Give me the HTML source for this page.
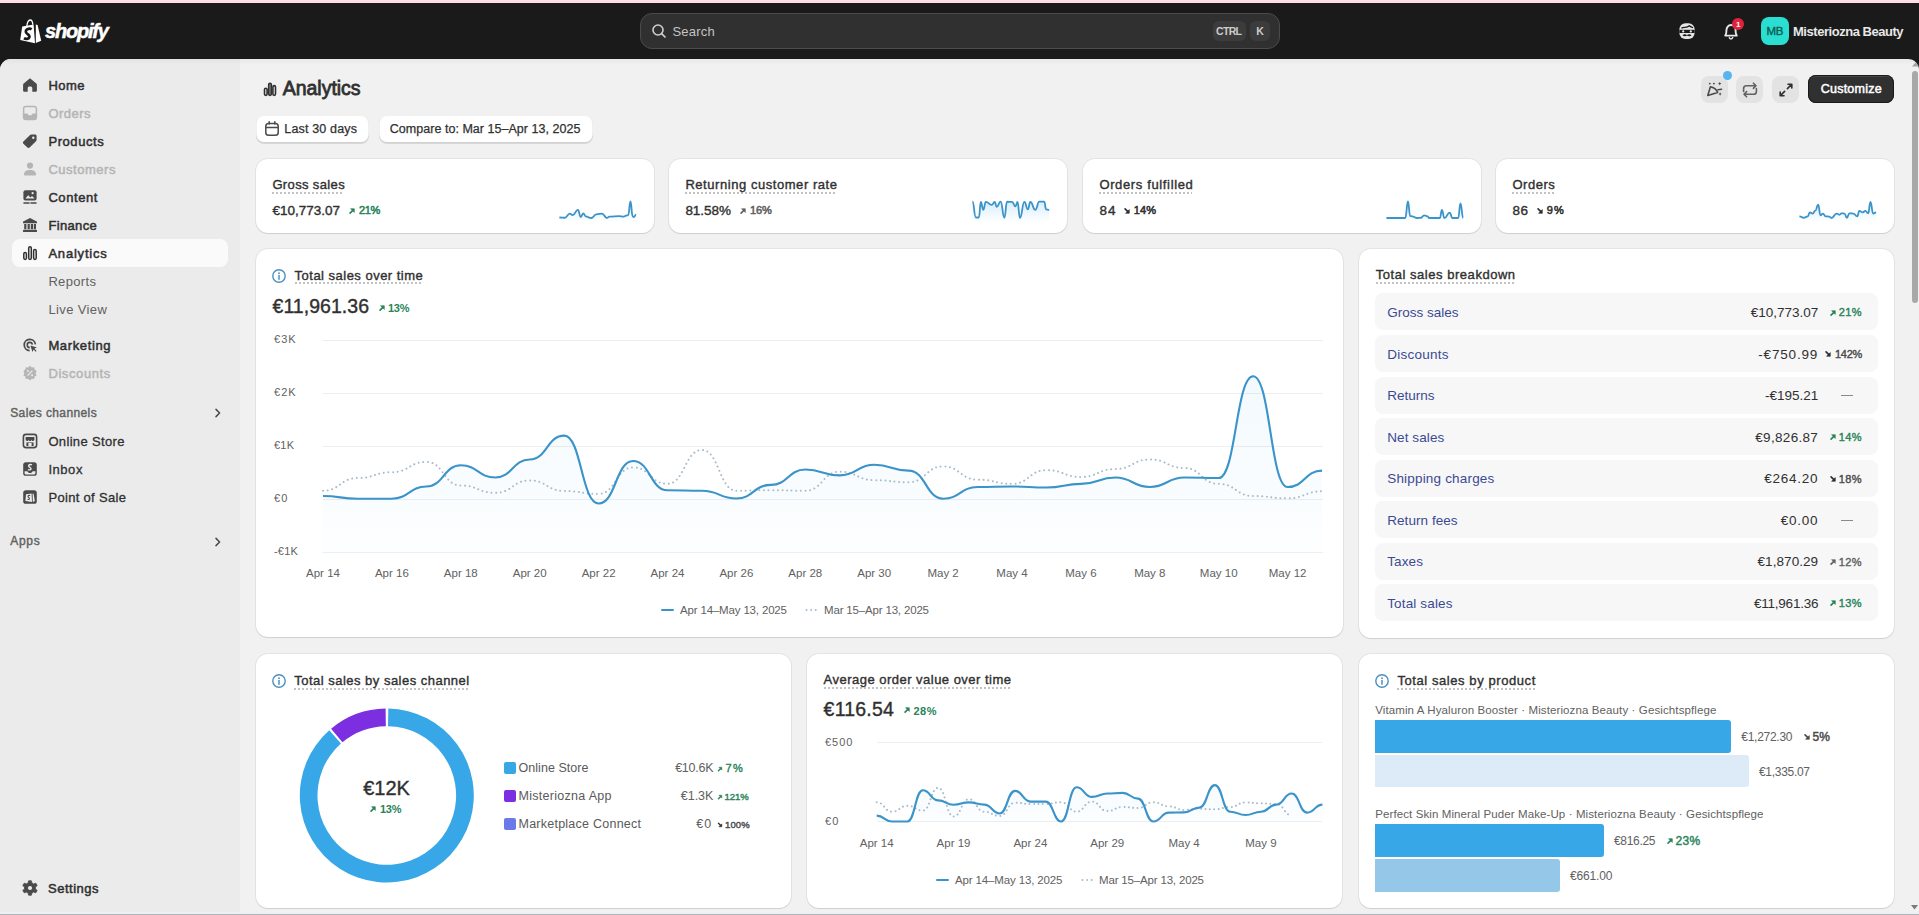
<!DOCTYPE html>
<html><head><meta charset="utf-8"><title>Analytics</title>
<style>
html,body{margin:0;padding:0;width:1919px;height:915px;overflow:hidden;background:#1a1a1a;}
body{position:relative;font-family:"Liberation Sans",sans-serif;}
.t{position:absolute;white-space:nowrap;line-height:1;}
</style></head><body>
<div style="position:absolute;left:0;top:0;width:1919px;height:3px;background:#fbdfe5"></div>
<div style="position:absolute;left:0;top:3px;width:1919px;height:56px;background:#1a1a1a"></div>
<div style="position:absolute;left:0;top:58px;width:1919px;height:857px;background:#1a1a1a"></div>
<div style="position:absolute;left:0;top:58.6px;width:1919px;height:855.4px;background:#f1f1f1;border-radius:11px 11px 0 0;overflow:hidden">
  <div style="position:absolute;left:0;top:0;width:240px;height:856px;background:#ebebeb"></div>
  <div style="position:absolute;left:0;top:0;width:1919px;height:6px;background:linear-gradient(rgba(0,0,0,0.035),rgba(0,0,0,0))"></div>
</div>
<div style="position:absolute;left:0;top:912px;width:1919px;height:2px;background:#eeeff1"></div>
<div style="position:absolute;left:0;top:914px;width:1919px;height:1px;background:#b2b5b8"></div>

<svg style="position:absolute;left:0;top:0" width="120" height="58">
 <path d="M22.2,26.6 L33.6,24.4 L35.0,43.2 L20.2,40.0 Z" fill="#fff"/>
 <path d="M35.8,24.6 L37.6,24.9 L41.2,40.8 L35.8,43.0 Z" fill="#fff"/>
 <path d="M26.8,26.2 C27.2,22.6 28.6,20.2 30.2,20.0 C31.6,19.9 32.6,21.4 32.8,24.6" fill="none" stroke="#fff" stroke-width="1.3"/>
 <path d="M31.6,29.4 C30.2,28.4 26.4,28.2 25.8,31.2 C25.2,34.2 30.2,34.0 29.4,37.2 C28.8,39.4 25.4,39.2 24.0,38.2" fill="none" stroke="#1a1a1a" stroke-width="2.7"/>
</svg>
<div style="position:absolute;left:640px;top:13px;width:638px;height:34px;border:1px solid #4b4b4b;border-radius:12px;background:#303030"></div>
<svg style="position:absolute;left:650px;top:22px" width="18" height="18" viewBox="0 0 18 18">
 <circle cx="8" cy="8" r="5" fill="none" stroke="#cfcfcf" stroke-width="1.6"/>
 <path d="M11.6,11.6 L15,15" stroke="#cfcfcf" stroke-width="1.7" stroke-linecap="round"/>
</svg>
<div style="position:absolute;left:1213px;top:21px;width:33px;height:20px;border-radius:6px;background:#3c3c3c"></div>
<div style="position:absolute;left:1250px;top:21px;width:20px;height:20px;border-radius:6px;background:#3c3c3c"></div>
<svg style="position:absolute;left:1676px;top:20px" width="22" height="22" viewBox="0 0 22 22">
 <rect x="3.4" y="3.2" width="15.2" height="15.8" rx="6" fill="#e6e6e6"/>
 <path d="M5.4 8.2 C7.6 6.2 10.6 8.6 13.4 5.8 C14.6 7 16 7.4 17 7.6" fill="none" stroke="#1a1a1a" stroke-width="1.3"/>
 <rect x="3.4" y="9.8" width="15.2" height="3.2" fill="#1a1a1a"/>
 <circle cx="7.2" cy="11.4" r="1.15" fill="#e6e6e6"/><circle cx="14.8" cy="11.4" r="1.15" fill="#e6e6e6"/>
 <path d="M6.4 15.6 C8.2 13.6 9.8 14.4 11 15 C12.2 14.4 13.8 13.6 15.6 15.6 C14 16.4 12.2 16.2 11 15.6 C9.8 16.2 8 16.4 6.4 15.6 Z" fill="#1a1a1a"/>
</svg>
<svg style="position:absolute;left:1720px;top:20px" width="22" height="22" viewBox="0 0 22 22">
 <path d="M5.2,15.6 L5.8,14.4 C6.4,13.2 6.4,12 6.4,10.6 C6.4,7.4 8.4,5 11,5 C13.6,5 15.6,7.4 15.6,10.6 C15.6,12 15.6,13.2 16.2,14.4 L16.8,15.6 Z" fill="none" stroke="#e8e8e8" stroke-width="1.9" stroke-linejoin="round"/>
 <path d="M9.2,17.2 C9.4,18.4 10.2,19 11,19 C11.8,19 12.6,18.4 12.8,17.2" fill="none" stroke="#e3e3e3" stroke-width="1.5"/>
</svg>
<div style="position:absolute;left:1732.2px;top:18px;width:11.8px;height:11.8px;border-radius:50%;background:#e0223d"></div>
<div style="position:absolute;left:1761px;top:17px;width:28px;height:28px;border-radius:8px;background:#2adfd1"></div>

<div style="position:absolute;left:12px;top:239px;width:216px;height:28px;border-radius:8px;background:#fafafa"></div>
<svg style="position:absolute;left:20px;top:74.5px" width="20" height="20" viewBox="0 0 20 20"><path d="M10 3.2 L16.3 8.5 C16.7 8.8 16.9 9.3 16.9 9.8 V15.4 C16.9 16.2 16.3 16.8 15.5 16.8 H12.3 V13 C12.3 12 11.5 11.4 10.5 11.4 H9.5 C8.5 11.4 7.7 12 7.7 13 V16.8 H4.5 C3.7 16.8 3.1 16.2 3.1 15.4 V9.8 C3.1 9.3 3.3 8.8 3.7 8.5 Z" fill="#4a4a4a"/></svg>
<svg style="position:absolute;left:20px;top:102.8px" width="20" height="20" viewBox="0 0 20 20"><rect x="3.6" y="3.6" width="12.8" height="12.8" rx="2.2" fill="none" stroke="#b5b5b5" stroke-width="1.5"/><path d="M3.6 10.4 H7.4 L8.6 12.2 H11.4 L12.6 10.4 H16.4 V14.2 C16.4 15.4 15.6 16.4 14.2 16.4 H5.8 C4.4 16.4 3.6 15.4 3.6 14.2 Z" fill="#b5b5b5"/></svg>
<svg style="position:absolute;left:20px;top:130.5px" width="20" height="20" viewBox="0 0 20 20"><path d="M3.4 10.6 L9.8 4.2 C10.2 3.8 10.8 3.5 11.4 3.5 H15 C16 3.5 16.6 4.2 16.6 5.1 V8.6 C16.6 9.2 16.4 9.8 16 10.2 L9.6 16.6 C9 17.2 8 17.2 7.4 16.6 L3.4 12.8 C2.8 12.2 2.8 11.2 3.4 10.6 Z" fill="#4a4a4a"/><circle cx="13.3" cy="6.8" r="1.2" fill="#ebebeb"/></svg>
<svg style="position:absolute;left:20px;top:158.5px" width="20" height="20" viewBox="0 0 20 20"><circle cx="10" cy="6.6" r="3.1" fill="#b5b5b5"/><path d="M4 15.2 C4 12.4 6.6 10.9 10 10.9 C13.4 10.9 16 12.4 16 15.2 C16 16 15.5 16.5 14.7 16.5 H5.3 C4.5 16.5 4 16 4 15.2 Z" fill="#b5b5b5"/></svg>
<svg style="position:absolute;left:20px;top:186.5px" width="20" height="20" viewBox="0 0 20 20"><rect x="3.4" y="3.2" width="13.2" height="10.4" rx="2" fill="#4a4a4a"/><path d="M5.4 11.4 L8.2 8.2 L10.4 10.4 L12 9 L14.6 11.4 Z" fill="#ebebeb"/><circle cx="12.6" cy="6.2" r="1.1" fill="#ebebeb"/><path d="M4 16 H9 M11 16 H16" stroke="#4a4a4a" stroke-width="1.6" stroke-linecap="round"/></svg>
<svg style="position:absolute;left:20px;top:214.5px" width="20" height="20" viewBox="0 0 20 20"><path d="M10 3 L16.8 6.4 C17 6.5 17 6.8 17 7 V8.2 H3 V7 C3 6.8 3 6.5 3.2 6.4 Z" fill="#4a4a4a"/><rect x="4.2" y="9" width="2.2" height="5.2" fill="#4a4a4a"/><rect x="7.6" y="9" width="2.2" height="5.2" fill="#4a4a4a"/><rect x="10.8" y="9" width="2.2" height="5.2" fill="#4a4a4a"/><rect x="13.8" y="9" width="2.2" height="5.2" fill="#4a4a4a"/><rect x="3" y="14.8" width="14" height="2.2" rx="0.6" fill="#4a4a4a"/></svg>
<svg style="position:absolute;left:20px;top:242.8px" width="20" height="20" viewBox="0 0 20 20"><rect x="3.8" y="9.6" width="2.6" height="6.8" rx="1.3" fill="none" stroke="#303030" stroke-width="1.5"/><rect x="8.7" y="3.8" width="2.6" height="12.6" rx="1.3" fill="none" stroke="#303030" stroke-width="1.5"/><rect x="13.6" y="6.6" width="2.6" height="9.8" rx="1.3" fill="none" stroke="#303030" stroke-width="1.5"/></svg>
<svg style="position:absolute;left:20px;top:334.5px" width="20" height="20" viewBox="0 0 20 20"><path d="M15.4 9.4 A5.6 5.6 0 1 0 9.6 15.6" fill="none" stroke="#4a4a4a" stroke-width="1.7"/><path d="M12.4 9.6 A2.6 2.6 0 1 0 9.8 12.6" fill="none" stroke="#4a4a4a" stroke-width="1.6"/><path d="M10.4 10.4 L17 12.4 L14.4 13.6 L16.6 16 L15.8 16.8 L13.6 14.6 L12.4 17 Z" fill="#4a4a4a"/></svg>
<svg style="position:absolute;left:20px;top:362.5px" width="20" height="20" viewBox="0 0 20 20"><path d="M10 2.8 L11.8 4.4 L14.2 4.2 L14.6 6.6 L16.6 8 L15.6 10.2 L16.6 12.4 L14.6 13.6 L14.2 16 L11.8 15.8 L10 17.4 L8.2 15.8 L5.8 16 L5.4 13.6 L3.4 12.4 L4.4 10.2 L3.4 8 L5.4 6.6 L5.8 4.2 L8.2 4.4 Z" fill="#b5b5b5"/><path d="M7.6 12.6 L12.4 7.6" stroke="#ebebeb" stroke-width="1.3"/><circle cx="7.9" cy="8" r="1" fill="#ebebeb"/><circle cx="12.1" cy="12.2" r="1" fill="#ebebeb"/></svg>
<svg style="position:absolute;left:20px;top:430.5px" width="20" height="20" viewBox="0 0 20 20"><rect x="3.4" y="3.4" width="13.2" height="13.2" rx="2.6" fill="none" stroke="#4a4a4a" stroke-width="1.6"/><path d="M5.6 6 H14.4 V8.6 C14.4 9.6 13.6 10 12.9 10 C12.2 10 11.4 9.6 11.4 8.8 C11.4 9.6 10.7 10 10 10 C9.3 10 8.6 9.6 8.6 8.8 C8.6 9.6 7.8 10 7.1 10 C6.4 10 5.6 9.6 5.6 8.6 Z" fill="#4a4a4a"/><rect x="6.4" y="11.4" width="7.2" height="3.6" fill="#4a4a4a"/><rect x="8.4" y="12" width="3.2" height="3" fill="#ebebeb"/></svg>
<svg style="position:absolute;left:20px;top:458.5px" width="20" height="20" viewBox="0 0 20 20"><rect x="3.2" y="3.2" width="13.6" height="13.6" rx="2.6" fill="#4a4a4a"/><path d="M4.6 12.2 H7.4 C7.8 13.4 8.8 14 10 14 C11.2 14 12.2 13.4 12.6 12.2 H15.4 V14.2 C15.4 14.9 14.9 15.4 14.2 15.4 H5.8 C5.1 15.4 4.6 14.9 4.6 14.2 Z" fill="#ebebeb"/><path d="M12 5.8 C11.2 5.3 9 5.1 8.6 6.7 C8.2 8.4 11.6 8.2 11 10 C10.6 11.2 8.6 11 8 10.5" fill="none" stroke="#ebebeb" stroke-width="1.4"/></svg>
<svg style="position:absolute;left:20px;top:486.5px" width="20" height="20" viewBox="0 0 20 20"><rect x="3.2" y="3.2" width="13.6" height="13.6" rx="2.6" fill="#4a4a4a"/><path d="M6 7.2 L11.6 6.4 L12 15 L5.4 14 Z" fill="#ebebeb"/><path d="M12.6 6.6 L13.6 6.8 L14.8 14 L12.8 15 Z" fill="#ebebeb"/><path d="M10.2 8.6 C9.6 8.2 8.2 8.2 8 9.4 C7.8 10.6 9.8 10.4 9.4 11.8 C9.2 12.6 8.2 12.6 7.6 12.2" fill="none" stroke="#4a4a4a" stroke-width="1.1"/></svg>
<svg style="position:absolute;left:20px;top:878.3px" width="20" height="20" viewBox="0 0 20 20"><path d="M8.6 2.8 H11.4 L11.9 5 L13.6 5.9 L15.8 5.2 L17.2 7.6 L15.5 9.1 V10.9 L17.2 12.4 L15.8 14.8 L13.6 14.1 L11.9 15 L11.4 17.2 H8.6 L8.1 15 L6.4 14.1 L4.2 14.8 L2.8 12.4 L4.5 10.9 V9.1 L2.8 7.6 L4.2 5.2 L6.4 5.9 L8.1 5 Z" fill="#4a4a4a" stroke="#4a4a4a" stroke-width="0.8" stroke-linejoin="round"/><circle cx="10" cy="10" r="2.1" fill="#ebebeb"/></svg>
<svg style="position:absolute;left:210px;top:405px" width="16" height="16" viewBox="0 0 16 16"><path d="M6 4.4 L9.6 8 L6 11.6" fill="none" stroke="#4a4a4a" stroke-width="1.5" stroke-linecap="round" stroke-linejoin="round"/></svg>
<svg style="position:absolute;left:210px;top:534px" width="16" height="16" viewBox="0 0 16 16"><path d="M6 4.4 L9.6 8 L6 11.6" fill="none" stroke="#4a4a4a" stroke-width="1.5" stroke-linecap="round" stroke-linejoin="round"/></svg>
<svg style="position:absolute;left:259.8px;top:79px" width="20" height="20" viewBox="0 0 20 20">
<rect x="4.5" y="9.2" width="2.6" height="7.2" rx="1.3" fill="none" stroke="#303030" stroke-width="1.6"/>
<rect x="8.7" y="4.2" width="2.6" height="12.2" rx="1.3" fill="#9a9a9a" stroke="#303030" stroke-width="1.6"/>
<rect x="12.9" y="6.6" width="2.6" height="9.8" rx="1.3" fill="none" stroke="#303030" stroke-width="1.6"/>
</svg>
<div style="position:absolute;left:256px;top:115.2px;width:113px;height:27.6px;border-radius:8px;background:#fff;box-shadow:0 1px 0 0 rgba(0,0,0,0.10),0 0 0 1px rgba(0,0,0,0.06) inset, 0 -1px 0 0 rgba(0,0,0,0.13) inset;"></div>
<div style="position:absolute;left:378.5px;top:115.2px;width:214px;height:27.6px;border-radius:8px;background:#fff;box-shadow:0 1px 0 0 rgba(0,0,0,0.10),0 0 0 1px rgba(0,0,0,0.06) inset, 0 -1px 0 0 rgba(0,0,0,0.13) inset;"></div>
<svg style="position:absolute;left:262px;top:119px" width="20" height="20" viewBox="0 0 20 20">
<rect x="3.8" y="4.4" width="12.4" height="11.8" rx="2.8" fill="none" stroke="#4a4a4a" stroke-width="1.5"/>
<path d="M3.8 8.4 H16.2 M7.2 2.8 V5 M12.8 2.8 V5" stroke="#4a4a4a" stroke-width="1.5" stroke-linecap="round"/>
</svg>
<div style="position:absolute;left:1701px;top:76px;width:27px;height:27px;border-radius:8px;background:#e3e3e3"></div>
<div style="position:absolute;left:1736px;top:76px;width:27px;height:27px;border-radius:8px;background:#e3e3e3"></div>
<div style="position:absolute;left:1772px;top:76px;width:27px;height:27px;border-radius:8px;background:#e3e3e3"></div>
<svg style="position:absolute;left:1704.5px;top:79.5px" width="20" height="20" viewBox="0 0 20 20">
<path d="M2.8 15.4 L5.4 6.8 C8.4 7.4 11.6 10 12.6 12.4 Z" fill="none" stroke="#4a4a4a" stroke-width="1.6" stroke-linejoin="round"/>
<circle cx="4.8" cy="3.6" r="0.95" fill="#4a4a4a"/><circle cx="8.9" cy="3.6" r="0.95" fill="#4a4a4a"/>
<path d="M14.7 1.9 L15.3 3 L16.4 3.6 L15.3 4.2 L14.7 5.3 L14.1 4.2 L13 3.6 L14.1 3 Z" fill="#4a4a4a"/>
<path d="M13 9.8 L16.6 9.2" stroke="#4a4a4a" stroke-width="1.5" stroke-linecap="round"/>
<path d="M15.1 12.3 L15.7 13.4 L16.8 14 L15.7 14.6 L15.1 15.7 L14.5 14.6 L13.4 14 L14.5 13.4 Z" fill="#4a4a4a"/>
</svg>
<div style="position:absolute;left:1722.6px;top:71.4px;width:9px;height:9px;border-radius:50%;background:#56b4ee"></div>
<svg style="position:absolute;left:1739.5px;top:79.5px" width="20" height="20" viewBox="0 0 20 20">
<path d="M3.6 11.4 V8.6 C3.6 7 4.8 5.8 6.4 5.8 H16 M13.4 3.2 L16 5.8 L13.4 8.4" fill="none" stroke="#616161" stroke-width="1.6" stroke-linecap="round" stroke-linejoin="round"/>
<path d="M16.4 8.6 V11.4 C16.4 13 15.2 14.2 13.6 14.2 H4 M6.6 11.6 L4 14.2 L6.6 16.8" fill="none" stroke="#616161" stroke-width="1.6" stroke-linecap="round" stroke-linejoin="round"/>
</svg>
<svg style="position:absolute;left:1775.5px;top:79.5px" width="20" height="20" viewBox="0 0 20 20">
<path d="M11.4 8.6 L15.6 4.4 M12 4.2 H15.8 V8" fill="none" stroke="#303030" stroke-width="1.6" stroke-linecap="round" stroke-linejoin="round"/>
<path d="M8.6 11.4 L4.4 15.6 M8 15.8 H4.2 V12" fill="none" stroke="#303030" stroke-width="1.6" stroke-linecap="round" stroke-linejoin="round"/>
</svg>
<div style="position:absolute;left:1808px;top:75px;width:86px;height:28px;border-radius:8px;background:#303030;box-shadow:0 0 0 1px #1a1a1a inset, 0 2px 0 0 rgba(255,255,255,0.1) inset"></div>

<div style="position:absolute;left:256px;top:159px;width:398px;height:74px;border-radius:12px;background:#fff;box-shadow:0 1px 1px 0 rgba(26,26,26,0.10), 0 0 0 1px rgba(0,0,0,0.05);"></div>
<div style="position:absolute;left:272px;top:192px;width:72px;height:2px;background-image:linear-gradient(90deg,#c2c2c2 50%,transparent 50%);background-size:4px 2px"></div>
<svg style="position:absolute;left:347px;top:205.6px" width="10" height="10" viewBox="0 0 10 10"><g transform="translate(5 5) scale(0.880) translate(-5 -5)"><path d="M2.8 7.4 L6 4.2" stroke="#29845a" stroke-width="1.9" stroke-linecap="round"/><path d="M3.4 2.4 H7.6 V6.6 Z" fill="#29845a" stroke="#29845a" stroke-width="0.7" stroke-linejoin="round"/></g></svg>
<div style="position:absolute;left:669px;top:159px;width:398px;height:74px;border-radius:12px;background:#fff;box-shadow:0 1px 1px 0 rgba(26,26,26,0.10), 0 0 0 1px rgba(0,0,0,0.05);"></div>
<div style="position:absolute;left:685px;top:192px;width:152px;height:2px;background-image:linear-gradient(90deg,#c2c2c2 50%,transparent 50%);background-size:4px 2px"></div>
<svg style="position:absolute;left:737.8px;top:205.6px" width="10" height="10" viewBox="0 0 10 10"><g transform="translate(5 5) scale(0.880) translate(-5 -5)"><path d="M2.8 7.4 L6 4.2" stroke="#616161" stroke-width="1.9" stroke-linecap="round"/><path d="M3.4 2.4 H7.6 V6.6 Z" fill="#616161" stroke="#616161" stroke-width="0.7" stroke-linejoin="round"/></g></svg>
<div style="position:absolute;left:1083px;top:159px;width:398px;height:74px;border-radius:12px;background:#fff;box-shadow:0 1px 1px 0 rgba(26,26,26,0.10), 0 0 0 1px rgba(0,0,0,0.05);"></div>
<div style="position:absolute;left:1099px;top:192px;width:93px;height:2px;background-image:linear-gradient(90deg,#c2c2c2 50%,transparent 50%);background-size:4px 2px"></div>
<svg style="position:absolute;left:1122px;top:205.6px" width="10" height="10" viewBox="0 0 10 10"><g transform="translate(5 5) scale(0.880) translate(-5 -5)"><path d="M2.8 2.6 L6 5.8" stroke="#303030" stroke-width="1.9" stroke-linecap="round"/><path d="M3.4 7.6 H7.6 V3.4 Z" fill="#303030" stroke="#303030" stroke-width="0.7" stroke-linejoin="round"/></g></svg>
<div style="position:absolute;left:1496px;top:159px;width:398px;height:74px;border-radius:12px;background:#fff;box-shadow:0 1px 1px 0 rgba(26,26,26,0.10), 0 0 0 1px rgba(0,0,0,0.05);"></div>
<div style="position:absolute;left:1512px;top:192px;width:42px;height:2px;background-image:linear-gradient(90deg,#c2c2c2 50%,transparent 50%);background-size:4px 2px"></div>
<svg style="position:absolute;left:1535px;top:205.6px" width="10" height="10" viewBox="0 0 10 10"><g transform="translate(5 5) scale(0.880) translate(-5 -5)"><path d="M2.8 2.6 L6 5.8" stroke="#303030" stroke-width="1.9" stroke-linecap="round"/><path d="M3.4 7.6 H7.6 V3.4 Z" fill="#303030" stroke="#303030" stroke-width="0.7" stroke-linejoin="round"/></g></svg>
<svg style="position:absolute;left:0;top:0;overflow:visible" width="1" height="1">
<defs><linearGradient id="sg0" x1="0" y1="0" x2="0" y2="1"><stop offset="0" stop-color="#4fb0f0" stop-opacity="0.22"/><stop offset="1" stop-color="#4fb0f0" stop-opacity="0"/></linearGradient></defs>
<path d="M559.41,217.52C562.13,217.52 562.13,217.77 564.85,217.77C567.33,217.77 567.33,213.56 569.80,213.56C571.29,213.56 571.29,215.05 572.77,215.05C575.37,215.05 575.37,209.85 577.97,209.85C579.33,209.85 579.33,217.03 580.69,217.03C582.05,217.03 582.05,213.32 583.42,213.32C584.53,213.32 584.53,216.29 585.64,216.29C588.37,216.29 588.37,218.02 591.09,218.02C593.81,218.02 593.81,214.31 596.53,214.31C599.26,214.31 599.26,213.56 601.98,213.56C604.46,213.56 604.46,218.02 606.93,218.02C608.17,218.02 608.17,216.53 609.41,216.53C614.36,216.53 614.36,216.04 619.31,216.04C621.29,216.04 621.29,216.53 623.27,216.53C625.74,216.53 625.74,215.05 628.22,215.05C629.33,215.05 629.33,201.44 630.45,201.44C631.56,201.44 631.56,216.29 632.67,216.29C633.17,216.29 633.17,217.03 633.66,217.03C634.90,217.03 634.90,214.55 636.14,214.55L636.14,222 L559.41,222 Z" fill="url(#sg0)"/>
<path d="M559.41,217.52C562.13,217.52 562.13,217.77 564.85,217.77C567.33,217.77 567.33,213.56 569.80,213.56C571.29,213.56 571.29,215.05 572.77,215.05C575.37,215.05 575.37,209.85 577.97,209.85C579.33,209.85 579.33,217.03 580.69,217.03C582.05,217.03 582.05,213.32 583.42,213.32C584.53,213.32 584.53,216.29 585.64,216.29C588.37,216.29 588.37,218.02 591.09,218.02C593.81,218.02 593.81,214.31 596.53,214.31C599.26,214.31 599.26,213.56 601.98,213.56C604.46,213.56 604.46,218.02 606.93,218.02C608.17,218.02 608.17,216.53 609.41,216.53C614.36,216.53 614.36,216.04 619.31,216.04C621.29,216.04 621.29,216.53 623.27,216.53C625.74,216.53 625.74,215.05 628.22,215.05C629.33,215.05 629.33,201.44 630.45,201.44C631.56,201.44 631.56,216.29 632.67,216.29C633.17,216.29 633.17,217.03 633.66,217.03C634.90,217.03 634.90,214.55 636.14,214.55" fill="none" stroke="#3a93c9" stroke-width="1.8" stroke-linejoin="round"/></svg>
<svg style="position:absolute;left:0;top:0;overflow:visible" width="1" height="1">
<defs><linearGradient id="sg1" x1="0" y1="0" x2="0" y2="1"><stop offset="0" stop-color="#4fb0f0" stop-opacity="0.22"/><stop offset="1" stop-color="#4fb0f0" stop-opacity="0"/></linearGradient></defs>
<path d="M972.43,201.44C974.16,201.44 974.16,217.52 975.89,217.52C977.38,217.52 977.38,217.52 978.86,217.52C979.85,217.52 979.85,201.93 980.84,201.93C982.08,201.93 982.08,209.85 983.32,209.85C984.55,209.85 984.55,201.93 985.79,201.93C988.76,201.93 988.76,204.90 991.73,204.90C993.22,204.90 993.22,201.93 994.70,201.93C995.69,201.93 995.69,206.88 996.68,206.88C998.66,206.88 998.66,201.68 1000.64,201.68C1002.50,201.68 1002.50,217.77 1004.36,217.77C1005.72,217.77 1005.72,201.68 1007.08,201.68C1009.55,201.68 1009.55,201.93 1012.03,201.93C1013.76,201.93 1013.76,206.39 1015.50,206.39C1016.49,206.39 1016.49,201.93 1017.48,201.93C1018.71,201.93 1018.71,217.77 1019.95,217.77C1022.18,217.77 1022.18,201.93 1024.41,201.93C1026.14,201.93 1026.14,209.36 1027.87,209.36C1029.11,209.36 1029.11,201.93 1030.35,201.93C1032.82,201.93 1032.82,209.85 1035.30,209.85C1037.28,209.85 1037.28,201.68 1039.26,201.68C1041.73,201.68 1041.73,201.68 1044.21,201.68C1045.20,201.68 1045.20,209.36 1046.19,209.36C1047.67,209.36 1047.67,209.85 1049.16,209.85L1049.16,222 L972.43,222 Z" fill="url(#sg1)"/>
<path d="M972.43,201.44C974.16,201.44 974.16,217.52 975.89,217.52C977.38,217.52 977.38,217.52 978.86,217.52C979.85,217.52 979.85,201.93 980.84,201.93C982.08,201.93 982.08,209.85 983.32,209.85C984.55,209.85 984.55,201.93 985.79,201.93C988.76,201.93 988.76,204.90 991.73,204.90C993.22,204.90 993.22,201.93 994.70,201.93C995.69,201.93 995.69,206.88 996.68,206.88C998.66,206.88 998.66,201.68 1000.64,201.68C1002.50,201.68 1002.50,217.77 1004.36,217.77C1005.72,217.77 1005.72,201.68 1007.08,201.68C1009.55,201.68 1009.55,201.93 1012.03,201.93C1013.76,201.93 1013.76,206.39 1015.50,206.39C1016.49,206.39 1016.49,201.93 1017.48,201.93C1018.71,201.93 1018.71,217.77 1019.95,217.77C1022.18,217.77 1022.18,201.93 1024.41,201.93C1026.14,201.93 1026.14,209.36 1027.87,209.36C1029.11,209.36 1029.11,201.93 1030.35,201.93C1032.82,201.93 1032.82,209.85 1035.30,209.85C1037.28,209.85 1037.28,201.68 1039.26,201.68C1041.73,201.68 1041.73,201.68 1044.21,201.68C1045.20,201.68 1045.20,209.36 1046.19,209.36C1047.67,209.36 1047.67,209.85 1049.16,209.85" fill="none" stroke="#3a93c9" stroke-width="1.8" stroke-linejoin="round"/></svg>
<svg style="position:absolute;left:0;top:0;overflow:visible" width="1" height="1">
<defs><linearGradient id="sg2" x1="0" y1="0" x2="0" y2="1"><stop offset="0" stop-color="#4fb0f0" stop-opacity="0.22"/><stop offset="1" stop-color="#4fb0f0" stop-opacity="0"/></linearGradient></defs>
<path d="M1386.44,218.02C1395.84,218.02 1395.84,218.02 1405.25,218.02C1406.61,218.02 1406.61,201.44 1407.97,201.44C1409.08,201.44 1409.08,216.04 1410.20,216.04C1411.19,216.04 1411.19,216.29 1412.18,216.29C1414.65,216.29 1414.65,218.02 1417.13,218.02C1419.11,218.02 1419.11,217.77 1421.09,217.77C1422.57,217.77 1422.57,215.30 1424.06,215.30C1425.79,215.30 1425.79,216.29 1427.52,216.29C1428.27,216.29 1428.27,218.02 1429.01,218.02C1434.46,218.02 1434.46,218.02 1439.90,218.02C1440.89,218.02 1440.89,209.85 1441.88,209.85C1443.12,209.85 1443.12,218.02 1444.36,218.02C1447.08,218.02 1447.08,212.57 1449.80,212.57C1451.04,212.57 1451.04,218.02 1452.28,218.02C1455.25,218.02 1455.25,218.02 1458.22,218.02C1459.33,218.02 1459.33,203.42 1460.45,203.42C1461.81,203.42 1461.81,218.02 1463.17,218.02L1463.17,222 L1386.44,222 Z" fill="url(#sg2)"/>
<path d="M1386.44,218.02C1395.84,218.02 1395.84,218.02 1405.25,218.02C1406.61,218.02 1406.61,201.44 1407.97,201.44C1409.08,201.44 1409.08,216.04 1410.20,216.04C1411.19,216.04 1411.19,216.29 1412.18,216.29C1414.65,216.29 1414.65,218.02 1417.13,218.02C1419.11,218.02 1419.11,217.77 1421.09,217.77C1422.57,217.77 1422.57,215.30 1424.06,215.30C1425.79,215.30 1425.79,216.29 1427.52,216.29C1428.27,216.29 1428.27,218.02 1429.01,218.02C1434.46,218.02 1434.46,218.02 1439.90,218.02C1440.89,218.02 1440.89,209.85 1441.88,209.85C1443.12,209.85 1443.12,218.02 1444.36,218.02C1447.08,218.02 1447.08,212.57 1449.80,212.57C1451.04,212.57 1451.04,218.02 1452.28,218.02C1455.25,218.02 1455.25,218.02 1458.22,218.02C1459.33,218.02 1459.33,203.42 1460.45,203.42C1461.81,203.42 1461.81,218.02 1463.17,218.02" fill="none" stroke="#3a93c9" stroke-width="1.8" stroke-linejoin="round"/></svg>
<svg style="position:absolute;left:0;top:0;overflow:visible" width="1" height="1">
<defs><linearGradient id="sg3" x1="0" y1="0" x2="0" y2="1"><stop offset="0" stop-color="#4fb0f0" stop-opacity="0.22"/><stop offset="1" stop-color="#4fb0f0" stop-opacity="0"/></linearGradient></defs>
<path d="M1799.41,216.29C1801.63,216.29 1801.63,217.77 1803.86,217.77C1805.84,217.77 1805.84,216.29 1807.82,216.29C1808.81,216.29 1808.81,212.33 1809.80,212.33C1811.29,212.33 1811.29,213.56 1812.77,213.56C1814.01,213.56 1814.01,210.59 1815.25,210.59C1816.73,210.59 1816.73,204.65 1818.22,204.65C1819.33,204.65 1819.33,215.30 1820.45,215.30C1821.68,215.30 1821.68,213.56 1822.92,213.56C1824.28,213.56 1824.28,216.29 1825.64,216.29C1827.38,216.29 1827.38,216.53 1829.11,216.53C1830.35,216.53 1830.35,218.02 1831.58,218.02C1834.06,218.02 1834.06,213.56 1836.53,213.56C1838.02,213.56 1838.02,214.80 1839.50,214.80C1840.50,214.80 1840.50,213.32 1841.49,213.32C1842.97,213.32 1842.97,213.56 1844.46,213.56C1845.69,213.56 1845.69,217.77 1846.93,217.77C1848.17,217.77 1848.17,213.32 1849.41,213.32C1851.39,213.32 1851.39,213.56 1853.37,213.56C1855.35,213.56 1855.35,216.29 1857.33,216.29C1858.32,216.29 1858.32,210.84 1859.31,210.84C1861.04,210.84 1861.04,212.33 1862.77,212.33C1864.01,212.33 1864.01,210.84 1865.25,210.84C1866.73,210.84 1866.73,213.32 1868.22,213.32C1869.33,213.32 1869.33,201.93 1870.45,201.93C1871.81,201.93 1871.81,213.56 1873.17,213.56C1874.65,213.56 1874.65,212.33 1876.14,212.33L1876.14,222 L1799.41,222 Z" fill="url(#sg3)"/>
<path d="M1799.41,216.29C1801.63,216.29 1801.63,217.77 1803.86,217.77C1805.84,217.77 1805.84,216.29 1807.82,216.29C1808.81,216.29 1808.81,212.33 1809.80,212.33C1811.29,212.33 1811.29,213.56 1812.77,213.56C1814.01,213.56 1814.01,210.59 1815.25,210.59C1816.73,210.59 1816.73,204.65 1818.22,204.65C1819.33,204.65 1819.33,215.30 1820.45,215.30C1821.68,215.30 1821.68,213.56 1822.92,213.56C1824.28,213.56 1824.28,216.29 1825.64,216.29C1827.38,216.29 1827.38,216.53 1829.11,216.53C1830.35,216.53 1830.35,218.02 1831.58,218.02C1834.06,218.02 1834.06,213.56 1836.53,213.56C1838.02,213.56 1838.02,214.80 1839.50,214.80C1840.50,214.80 1840.50,213.32 1841.49,213.32C1842.97,213.32 1842.97,213.56 1844.46,213.56C1845.69,213.56 1845.69,217.77 1846.93,217.77C1848.17,217.77 1848.17,213.32 1849.41,213.32C1851.39,213.32 1851.39,213.56 1853.37,213.56C1855.35,213.56 1855.35,216.29 1857.33,216.29C1858.32,216.29 1858.32,210.84 1859.31,210.84C1861.04,210.84 1861.04,212.33 1862.77,212.33C1864.01,212.33 1864.01,210.84 1865.25,210.84C1866.73,210.84 1866.73,213.32 1868.22,213.32C1869.33,213.32 1869.33,201.93 1870.45,201.93C1871.81,201.93 1871.81,213.56 1873.17,213.56C1874.65,213.56 1874.65,212.33 1876.14,212.33" fill="none" stroke="#3a93c9" stroke-width="1.8" stroke-linejoin="round"/></svg>
<div style="position:absolute;left:256px;top:249px;width:1087px;height:388px;border-radius:12px;background:#fff;box-shadow:0 1px 1px 0 rgba(26,26,26,0.10), 0 0 0 1px rgba(0,0,0,0.05);"></div>
<svg style="position:absolute;left:271px;top:268px" width="16" height="16" viewBox="0 0 16 16"><circle cx="8" cy="8" r="6.2" fill="none" stroke="#4c8fc0" stroke-width="1.4"/><circle cx="8" cy="5.2" r="0.9" fill="#4c8fc0"/><path d="M8 7.4 V11.2" stroke="#4c8fc0" stroke-width="1.5" stroke-linecap="round"/></svg>
<div style="position:absolute;left:295px;top:282px;width:128px;height:2px;background-image:linear-gradient(90deg,#c2c2c2 50%,transparent 50%);background-size:4px 2px"></div>
<svg style="position:absolute;left:376.5px;top:302.6px" width="10" height="10" viewBox="0 0 10 10"><g transform="translate(5 5) scale(0.880) translate(-5 -5)"><path d="M2.8 7.4 L6 4.2" stroke="#29845a" stroke-width="1.9" stroke-linecap="round"/><path d="M3.4 2.4 H7.6 V6.6 Z" fill="#29845a" stroke="#29845a" stroke-width="0.7" stroke-linejoin="round"/></g></svg>
<div style="position:absolute;left:323px;top:339.5px;width:1000px;height:1px;background:#eeeeee"></div>
<div style="position:absolute;left:323px;top:392.5px;width:1000px;height:1px;background:#eeeeee"></div>
<div style="position:absolute;left:323px;top:445.5px;width:1000px;height:1px;background:#eeeeee"></div>
<div style="position:absolute;left:323px;top:498.5px;width:1000px;height:1px;background:#eeeeee"></div>
<div style="position:absolute;left:323px;top:551.5px;width:1000px;height:1px;background:#eeeeee"></div>
<svg style="position:absolute;left:0;top:0;overflow:visible" width="1" height="1">
<defs><linearGradient id="ga" gradientUnits="userSpaceOnUse" x1="0" y1="370" x2="0" y2="552"><stop offset="0" stop-color="#4fb0f0" stop-opacity="0.075"/><stop offset="1" stop-color="#4fb0f0" stop-opacity="0.012"/></linearGradient></defs>
<path d="M323.00,496.05C340.23,496.05 340.23,498.70 357.45,498.70C374.67,498.70 374.67,498.70 391.90,498.70C409.12,498.70 409.12,486.51 426.35,486.51C443.58,486.51 443.58,465.31 460.80,465.31C478.02,465.31 478.02,477.50 495.25,477.50C512.48,477.50 512.48,459.48 529.70,459.48C546.93,459.48 546.93,435.63 564.15,435.63C581.38,435.63 581.38,503.47 598.60,503.47C615.83,503.47 615.83,461.07 633.05,461.07C650.27,461.07 650.27,490.22 667.50,490.22C684.73,490.22 684.73,490.75 701.95,490.75C719.18,490.75 719.18,498.44 736.40,498.44C753.62,498.44 753.62,484.92 770.85,484.92C788.08,484.92 788.08,469.55 805.30,469.55C822.53,469.55 822.53,475.38 839.75,475.38C856.98,475.38 856.98,464.78 874.20,464.78C891.43,464.78 891.43,470.61 908.65,470.61C925.88,470.61 925.88,498.70 943.10,498.70C960.33,498.70 960.33,487.04 977.55,487.04C994.78,487.04 994.78,486.51 1012.00,486.51C1029.22,486.51 1029.22,487.57 1046.45,487.57C1063.68,487.57 1063.68,483.86 1080.90,483.86C1098.12,483.86 1098.12,477.50 1115.35,477.50C1132.58,477.50 1132.58,487.04 1149.80,487.04C1167.03,487.04 1167.03,477.50 1184.25,477.50C1201.47,477.50 1201.47,478.03 1218.70,478.03C1235.93,478.03 1235.93,376.27 1253.15,376.27C1270.38,376.27 1270.38,487.04 1287.60,487.04C1304.83,487.04 1304.83,470.61 1322.05,470.61L1322,552 L323,552 Z" fill="url(#ga)"/>
<path d="M323.00,490.75C340.23,490.75 340.23,478.03 357.45,478.03C374.67,478.03 374.67,472.20 391.90,472.20C409.12,472.20 409.12,461.87 426.35,461.87C443.58,461.87 443.58,485.45 460.80,485.45C478.02,485.45 478.02,492.87 495.25,492.87C512.48,492.87 512.48,480.41 529.70,480.41C546.93,480.41 546.93,490.96 564.15,490.96C581.38,490.96 581.38,493.93 598.60,493.93C615.83,493.93 615.83,467.43 633.05,467.43C650.27,467.43 650.27,483.86 667.50,483.86C684.73,483.86 684.73,449.94 701.95,449.94C719.18,449.94 719.18,490.75 736.40,490.75C753.62,490.75 753.62,490.22 770.85,490.22C788.08,490.22 788.08,490.75 805.30,490.75C822.53,490.75 822.53,471.67 839.75,471.67C856.98,471.67 856.98,480.15 874.20,480.15C891.43,480.15 891.43,482.27 908.65,482.27C925.88,482.27 925.88,466.37 943.10,466.37C960.33,466.37 960.33,479.62 977.55,479.62C994.78,479.62 994.78,483.86 1012.00,483.86C1029.22,483.86 1029.22,470.08 1046.45,470.08C1063.68,470.08 1063.68,476.97 1080.90,476.97C1098.12,476.97 1098.12,469.02 1115.35,469.02C1132.58,469.02 1132.58,459.48 1149.80,459.48C1167.03,459.48 1167.03,467.96 1184.25,467.96C1201.47,467.96 1201.47,483.86 1218.70,483.86C1235.93,483.86 1235.93,496.05 1253.15,496.05C1270.38,496.05 1270.38,498.33 1287.60,498.33C1304.83,498.33 1304.83,491.28 1322.05,491.28" fill="none" stroke="#a8bccb" stroke-width="2" stroke-dasharray="0.01 4.6" stroke-linecap="round"/>
<path d="M323.00,496.05C340.23,496.05 340.23,498.70 357.45,498.70C374.67,498.70 374.67,498.70 391.90,498.70C409.12,498.70 409.12,486.51 426.35,486.51C443.58,486.51 443.58,465.31 460.80,465.31C478.02,465.31 478.02,477.50 495.25,477.50C512.48,477.50 512.48,459.48 529.70,459.48C546.93,459.48 546.93,435.63 564.15,435.63C581.38,435.63 581.38,503.47 598.60,503.47C615.83,503.47 615.83,461.07 633.05,461.07C650.27,461.07 650.27,490.22 667.50,490.22C684.73,490.22 684.73,490.75 701.95,490.75C719.18,490.75 719.18,498.44 736.40,498.44C753.62,498.44 753.62,484.92 770.85,484.92C788.08,484.92 788.08,469.55 805.30,469.55C822.53,469.55 822.53,475.38 839.75,475.38C856.98,475.38 856.98,464.78 874.20,464.78C891.43,464.78 891.43,470.61 908.65,470.61C925.88,470.61 925.88,498.70 943.10,498.70C960.33,498.70 960.33,487.04 977.55,487.04C994.78,487.04 994.78,486.51 1012.00,486.51C1029.22,486.51 1029.22,487.57 1046.45,487.57C1063.68,487.57 1063.68,483.86 1080.90,483.86C1098.12,483.86 1098.12,477.50 1115.35,477.50C1132.58,477.50 1132.58,487.04 1149.80,487.04C1167.03,487.04 1167.03,477.50 1184.25,477.50C1201.47,477.50 1201.47,478.03 1218.70,478.03C1235.93,478.03 1235.93,376.27 1253.15,376.27C1270.38,376.27 1270.38,487.04 1287.60,487.04C1304.83,487.04 1304.83,470.61 1322.05,470.61" fill="none" stroke="#3a93c9" stroke-width="2.1" stroke-linejoin="round"/>
</svg>
<div style="position:absolute;left:661px;top:609px;width:13px;height:2px;border-radius:1px;background:#3a93c9"></div>
<svg style="position:absolute;left:804px;top:605px" width="16" height="10"><path d="M2.5 5 H14" stroke="#a8bccb" stroke-width="2" stroke-dasharray="0.01 4.6" stroke-linecap="round"/></svg>
<div style="position:absolute;left:1359px;top:249px;width:535px;height:389px;border-radius:12px;background:#fff;box-shadow:0 1px 1px 0 rgba(26,26,26,0.10), 0 0 0 1px rgba(0,0,0,0.05);"></div>
<div style="position:absolute;left:1376px;top:282px;width:139px;height:2px;background-image:linear-gradient(90deg,#c2c2c2 50%,transparent 50%);background-size:4px 2px"></div>
<div style="position:absolute;left:1375px;top:293.4px;width:503px;height:37px;border-radius:8px;background:#f7f7f7"></div>
<svg style="position:absolute;left:1827.6px;top:307.59999999999997px" width="10" height="10" viewBox="0 0 10 10"><g transform="translate(5 5) scale(0.880) translate(-5 -5)"><path d="M2.8 7.4 L6 4.2" stroke="#29845a" stroke-width="1.9" stroke-linecap="round"/><path d="M3.4 2.4 H7.6 V6.6 Z" fill="#29845a" stroke="#29845a" stroke-width="0.7" stroke-linejoin="round"/></g></svg>
<div style="position:absolute;left:1375px;top:334.9px;width:503px;height:37px;border-radius:8px;background:#f7f7f7"></div>
<svg style="position:absolute;left:1823.4px;top:349.15px" width="10" height="10" viewBox="0 0 10 10"><g transform="translate(5 5) scale(0.880) translate(-5 -5)"><path d="M2.8 2.6 L6 5.8" stroke="#303030" stroke-width="1.9" stroke-linecap="round"/><path d="M3.4 7.6 H7.6 V3.4 Z" fill="#303030" stroke="#303030" stroke-width="0.7" stroke-linejoin="round"/></g></svg>
<div style="position:absolute;left:1375px;top:376.5px;width:503px;height:37px;border-radius:8px;background:#f7f7f7"></div>
<div style="position:absolute;left:1841px;top:395.1px;width:11.5px;height:1.3px;background:#8a8a8a"></div>
<div style="position:absolute;left:1375px;top:418.0px;width:503px;height:37px;border-radius:8px;background:#f7f7f7"></div>
<svg style="position:absolute;left:1827.6px;top:432.24999999999994px" width="10" height="10" viewBox="0 0 10 10"><g transform="translate(5 5) scale(0.880) translate(-5 -5)"><path d="M2.8 7.4 L6 4.2" stroke="#29845a" stroke-width="1.9" stroke-linecap="round"/><path d="M3.4 2.4 H7.6 V6.6 Z" fill="#29845a" stroke="#29845a" stroke-width="0.7" stroke-linejoin="round"/></g></svg>
<div style="position:absolute;left:1375px;top:459.6px;width:503px;height:37px;border-radius:8px;background:#f7f7f7"></div>
<svg style="position:absolute;left:1827.6px;top:473.79999999999995px" width="10" height="10" viewBox="0 0 10 10"><g transform="translate(5 5) scale(0.880) translate(-5 -5)"><path d="M2.8 2.6 L6 5.8" stroke="#303030" stroke-width="1.9" stroke-linecap="round"/><path d="M3.4 7.6 H7.6 V3.4 Z" fill="#303030" stroke="#303030" stroke-width="0.7" stroke-linejoin="round"/></g></svg>
<div style="position:absolute;left:1375px;top:501.1px;width:503px;height:37px;border-radius:8px;background:#f7f7f7"></div>
<div style="position:absolute;left:1841px;top:519.8px;width:11.5px;height:1.3px;background:#8a8a8a"></div>
<div style="position:absolute;left:1375px;top:542.7px;width:503px;height:37px;border-radius:8px;background:#f7f7f7"></div>
<svg style="position:absolute;left:1827.6px;top:556.9px" width="10" height="10" viewBox="0 0 10 10"><g transform="translate(5 5) scale(0.880) translate(-5 -5)"><path d="M2.8 7.4 L6 4.2" stroke="#616161" stroke-width="1.9" stroke-linecap="round"/><path d="M3.4 2.4 H7.6 V6.6 Z" fill="#616161" stroke="#616161" stroke-width="0.7" stroke-linejoin="round"/></g></svg>
<div style="position:absolute;left:1375px;top:584.2px;width:503px;height:37px;border-radius:8px;background:#f7f7f7"></div>
<svg style="position:absolute;left:1827.6px;top:598.45px" width="10" height="10" viewBox="0 0 10 10"><g transform="translate(5 5) scale(0.880) translate(-5 -5)"><path d="M2.8 7.4 L6 4.2" stroke="#29845a" stroke-width="1.9" stroke-linecap="round"/><path d="M3.4 2.4 H7.6 V6.6 Z" fill="#29845a" stroke="#29845a" stroke-width="0.7" stroke-linejoin="round"/></g></svg>
<div style="position:absolute;left:256px;top:654px;width:535px;height:254px;border-radius:12px;background:#fff;box-shadow:0 1px 1px 0 rgba(26,26,26,0.10), 0 0 0 1px rgba(0,0,0,0.05);"></div>
<svg style="position:absolute;left:271px;top:673px" width="16" height="16" viewBox="0 0 16 16"><circle cx="8" cy="8" r="6.2" fill="none" stroke="#4c8fc0" stroke-width="1.4"/><circle cx="8" cy="5.2" r="0.9" fill="#4c8fc0"/><path d="M8 7.4 V11.2" stroke="#4c8fc0" stroke-width="1.5" stroke-linecap="round"/></svg>
<div style="position:absolute;left:294px;top:688px;width:175px;height:2px;background-image:linear-gradient(90deg,#c2c2c2 50%,transparent 50%);background-size:4px 2px"></div>
<svg style="position:absolute;left:0;top:0;overflow:visible" width="1" height="1"><path d="M388.32,708.51 A87,87 0 1 1 329.27,730.24 L340.97,743.52 A69.3,69.3 0 1 0 388.01,726.21 Z" fill="#38a7e8"/><path d="M331.11,728.66 A87,87 0 0 1 385.59,708.51 L385.83,726.21 A69.3,69.3 0 0 0 342.44,742.26 Z" fill="#7b2fe0"/></svg>
<svg style="position:absolute;left:367.5px;top:803.6px" width="10" height="10" viewBox="0 0 10 10"><g transform="translate(5 5) scale(0.880) translate(-5 -5)"><path d="M2.8 7.4 L6 4.2" stroke="#29845a" stroke-width="1.9" stroke-linecap="round"/><path d="M3.4 2.4 H7.6 V6.6 Z" fill="#29845a" stroke="#29845a" stroke-width="0.7" stroke-linejoin="round"/></g></svg>
<div style="position:absolute;left:504px;top:761.5px;width:12px;height:12px;border-radius:2px;background:#38a7e8"></div>
<svg style="position:absolute;left:715.4px;top:763.9px" width="10" height="10" viewBox="0 0 10 10"><g transform="translate(5 5) scale(0.704) translate(-5 -5)"><path d="M2.8 7.4 L6 4.2" stroke="#29845a" stroke-width="1.9" stroke-linecap="round"/><path d="M3.4 2.4 H7.6 V6.6 Z" fill="#29845a" stroke="#29845a" stroke-width="0.7" stroke-linejoin="round"/></g></svg>
<div style="position:absolute;left:504px;top:789.5px;width:12px;height:12px;border-radius:2px;background:#7b2fe0"></div>
<svg style="position:absolute;left:715.4px;top:791.9px" width="10" height="10" viewBox="0 0 10 10"><g transform="translate(5 5) scale(0.704) translate(-5 -5)"><path d="M2.8 7.4 L6 4.2" stroke="#29845a" stroke-width="1.9" stroke-linecap="round"/><path d="M3.4 2.4 H7.6 V6.6 Z" fill="#29845a" stroke="#29845a" stroke-width="0.7" stroke-linejoin="round"/></g></svg>
<div style="position:absolute;left:504px;top:817.5px;width:12px;height:12px;border-radius:2px;background:#6b7ae6"></div>
<svg style="position:absolute;left:715.4px;top:819.9px" width="10" height="10" viewBox="0 0 10 10"><g transform="translate(5 5) scale(0.704) translate(-5 -5)"><path d="M2.8 2.6 L6 5.8" stroke="#303030" stroke-width="1.9" stroke-linecap="round"/><path d="M3.4 7.6 H7.6 V3.4 Z" fill="#303030" stroke="#303030" stroke-width="0.7" stroke-linejoin="round"/></g></svg>
<div style="position:absolute;left:807px;top:654px;width:535px;height:254px;border-radius:12px;background:#fff;box-shadow:0 1px 1px 0 rgba(26,26,26,0.10), 0 0 0 1px rgba(0,0,0,0.05);"></div>
<div style="position:absolute;left:824px;top:687px;width:187px;height:2px;background-image:linear-gradient(90deg,#c2c2c2 50%,transparent 50%);background-size:4px 2px"></div>
<svg style="position:absolute;left:902px;top:705.4px" width="10" height="10" viewBox="0 0 10 10"><g transform="translate(5 5) scale(0.880) translate(-5 -5)"><path d="M2.8 7.4 L6 4.2" stroke="#29845a" stroke-width="1.9" stroke-linecap="round"/><path d="M3.4 2.4 H7.6 V6.6 Z" fill="#29845a" stroke="#29845a" stroke-width="0.7" stroke-linejoin="round"/></g></svg>
<div style="position:absolute;left:877px;top:741.9px;width:445px;height:1px;background:#eeeeee"></div>
<div style="position:absolute;left:877px;top:821.0px;width:445px;height:1px;background:#eeeeee"></div>
<svg style="position:absolute;left:0;top:0;overflow:visible" width="1" height="1">
<defs><linearGradient id="gb" gradientUnits="userSpaceOnUse" x1="0" y1="760" x2="0" y2="822"><stop offset="0" stop-color="#4fb0f0" stop-opacity="0.075"/><stop offset="1" stop-color="#4fb0f0" stop-opacity="0.015"/></linearGradient></defs>
<path d="M876.70,815.65C884.38,815.65 884.38,821.50 892.07,821.50C899.76,821.50 899.76,821.50 907.44,821.50C915.12,821.50 915.12,790.22 922.81,790.22C930.50,790.22 930.50,800.33 938.18,800.33C945.87,800.33 945.87,804.75 953.55,804.75C961.24,804.75 961.24,802.38 968.92,802.38C976.61,802.38 976.61,804.59 984.29,804.59C991.98,804.59 991.98,813.44 999.66,813.44C1007.35,813.44 1007.35,790.85 1015.03,790.85C1022.72,790.85 1022.72,801.59 1030.40,801.59C1038.09,801.59 1038.09,801.59 1045.77,801.59C1053.45,801.59 1053.45,821.50 1061.14,821.50C1068.83,821.50 1068.83,787.21 1076.51,787.21C1084.20,787.21 1084.20,796.85 1091.88,796.85C1099.57,796.85 1099.57,793.53 1107.25,793.53C1114.93,793.53 1114.93,792.90 1122.62,792.90C1130.31,792.90 1130.31,798.59 1137.99,798.59C1145.68,798.59 1145.68,821.50 1153.36,821.50C1161.05,821.50 1161.05,812.65 1168.73,812.65C1176.41,812.65 1176.41,812.34 1184.10,812.34C1191.78,812.34 1191.78,807.60 1199.47,807.60C1207.16,807.60 1207.16,785.16 1214.84,785.16C1222.53,785.16 1222.53,811.70 1230.21,811.70C1237.89,811.70 1237.89,815.02 1245.58,815.02C1253.26,815.02 1253.26,811.70 1260.95,811.70C1268.64,811.70 1268.64,804.59 1276.32,804.59C1284.01,804.59 1284.01,793.53 1291.69,793.53C1299.38,793.53 1299.38,812.65 1307.06,812.65C1314.74,812.65 1314.74,804.59 1322.43,804.59L1322.43,821.5 L876.7,821.5 Z" fill="url(#gb)"/>
<path d="M876.70,802.22C884.38,802.22 884.38,811.70 892.07,811.70C899.76,811.70 899.76,805.70 907.44,805.70C915.12,805.70 915.12,810.60 922.81,810.60C930.50,810.60 930.50,787.85 938.18,787.85C945.87,787.85 945.87,816.44 953.55,816.44C961.24,816.44 961.24,799.22 968.92,799.22C976.61,799.22 976.61,811.70 984.29,811.70C991.98,811.70 991.98,815.97 999.66,815.97C1007.35,815.97 1007.35,802.70 1015.03,802.70C1022.72,802.70 1022.72,803.96 1030.40,803.96C1038.09,803.96 1038.09,803.96 1045.77,803.96C1053.45,803.96 1053.45,802.22 1061.14,802.22C1068.83,802.22 1068.83,811.70 1076.51,811.70C1084.20,811.70 1084.20,801.59 1091.88,801.59C1099.57,801.59 1099.57,811.07 1107.25,811.07C1114.93,811.07 1114.93,806.96 1122.62,806.96C1130.31,806.96 1130.31,808.07 1137.99,808.07C1145.68,808.07 1145.68,802.22 1153.36,802.22C1161.05,802.22 1161.05,806.33 1168.73,806.33C1176.41,806.33 1176.41,809.97 1184.10,809.97C1191.78,809.97 1191.78,808.70 1199.47,808.70C1207.16,808.70 1207.16,809.33 1214.84,809.33C1222.53,809.33 1222.53,806.96 1230.21,806.96C1237.89,806.96 1237.89,802.38 1245.58,802.38C1253.26,802.38 1253.26,803.33 1260.95,803.33C1268.64,803.33 1268.64,803.96 1276.32,803.96C1284.01,803.96 1284.01,815.34 1291.69,815.34" fill="none" stroke="#a8bccb" stroke-width="2" stroke-dasharray="0.01 4.4" stroke-linecap="round"/>
<path d="M876.70,815.65C884.38,815.65 884.38,821.50 892.07,821.50C899.76,821.50 899.76,821.50 907.44,821.50C915.12,821.50 915.12,790.22 922.81,790.22C930.50,790.22 930.50,800.33 938.18,800.33C945.87,800.33 945.87,804.75 953.55,804.75C961.24,804.75 961.24,802.38 968.92,802.38C976.61,802.38 976.61,804.59 984.29,804.59C991.98,804.59 991.98,813.44 999.66,813.44C1007.35,813.44 1007.35,790.85 1015.03,790.85C1022.72,790.85 1022.72,801.59 1030.40,801.59C1038.09,801.59 1038.09,801.59 1045.77,801.59C1053.45,801.59 1053.45,821.50 1061.14,821.50C1068.83,821.50 1068.83,787.21 1076.51,787.21C1084.20,787.21 1084.20,796.85 1091.88,796.85C1099.57,796.85 1099.57,793.53 1107.25,793.53C1114.93,793.53 1114.93,792.90 1122.62,792.90C1130.31,792.90 1130.31,798.59 1137.99,798.59C1145.68,798.59 1145.68,821.50 1153.36,821.50C1161.05,821.50 1161.05,812.65 1168.73,812.65C1176.41,812.65 1176.41,812.34 1184.10,812.34C1191.78,812.34 1191.78,807.60 1199.47,807.60C1207.16,807.60 1207.16,785.16 1214.84,785.16C1222.53,785.16 1222.53,811.70 1230.21,811.70C1237.89,811.70 1237.89,815.02 1245.58,815.02C1253.26,815.02 1253.26,811.70 1260.95,811.70C1268.64,811.70 1268.64,804.59 1276.32,804.59C1284.01,804.59 1284.01,793.53 1291.69,793.53C1299.38,793.53 1299.38,812.65 1307.06,812.65C1314.74,812.65 1314.74,804.59 1322.43,804.59" fill="none" stroke="#3a93c9" stroke-width="2.1" stroke-linejoin="round"/>
</svg>
<div style="position:absolute;left:936px;top:879px;width:12.5px;height:2px;border-radius:1px;background:#3a93c9"></div>
<svg style="position:absolute;left:1080px;top:875px" width="16" height="10"><path d="M2.5 5 H14" stroke="#a8bccb" stroke-width="2" stroke-dasharray="0.01 4.6" stroke-linecap="round"/></svg>
<div style="position:absolute;left:1359px;top:654px;width:535px;height:254px;border-radius:12px;background:#fff;box-shadow:0 1px 1px 0 rgba(26,26,26,0.10), 0 0 0 1px rgba(0,0,0,0.05);"></div>
<svg style="position:absolute;left:1374px;top:673px" width="16" height="16" viewBox="0 0 16 16"><circle cx="8" cy="8" r="6.2" fill="none" stroke="#4c8fc0" stroke-width="1.4"/><circle cx="8" cy="5.2" r="0.9" fill="#4c8fc0"/><path d="M8 7.4 V11.2" stroke="#4c8fc0" stroke-width="1.5" stroke-linecap="round"/></svg>
<div style="position:absolute;left:1397px;top:688px;width:138px;height:2px;background-image:linear-gradient(90deg,#c2c2c2 50%,transparent 50%);background-size:4px 2px"></div>
<div style="position:absolute;left:1375px;top:720px;width:356px;height:33px;border-radius:0 3px 3px 0;background:#38a7e8"></div>
<div style="position:absolute;left:1375px;top:755.3px;width:374px;height:32px;border-radius:0 3px 3px 0;background:#dcebf7"></div>
<svg style="position:absolute;left:1802px;top:732.1px" width="10" height="10" viewBox="0 0 10 10"><g transform="translate(5 5) scale(0.880) translate(-5 -5)"><path d="M2.8 2.6 L6 5.8" stroke="#4a4a4a" stroke-width="1.9" stroke-linecap="round"/><path d="M3.4 7.6 H7.6 V3.4 Z" fill="#4a4a4a" stroke="#4a4a4a" stroke-width="0.7" stroke-linejoin="round"/></g></svg>
<div style="position:absolute;left:1375px;top:824px;width:228.5px;height:33px;border-radius:0 3px 3px 0;background:#38a7e8"></div>
<div style="position:absolute;left:1375px;top:859px;width:185px;height:33px;border-radius:0 3px 3px 0;background:#94c7e8"></div>
<svg style="position:absolute;left:1664.5px;top:835.9px" width="10" height="10" viewBox="0 0 10 10"><g transform="translate(5 5) scale(0.880) translate(-5 -5)"><path d="M2.8 7.4 L6 4.2" stroke="#29845a" stroke-width="1.9" stroke-linecap="round"/><path d="M3.4 2.4 H7.6 V6.6 Z" fill="#29845a" stroke="#29845a" stroke-width="0.7" stroke-linejoin="round"/></g></svg>
<div style="position:absolute;left:1912px;top:71px;width:6px;height:232px;border-radius:3px;background:#a8a8a8"></div>
<svg style="position:absolute;left:1911px;top:61px" width="9" height="7"><path d="M1 5.4 L4.5 1.6 L8 5.4 Z" fill="#a3a3a3"/></svg>
<svg style="position:absolute;left:1910px;top:904px" width="9" height="7"><path d="M1 1 L4.5 5.5 L8 1 Z" fill="#7a7a7a"/></svg>
<div class="t" style="left:45.00px;top:21.27px;font-size:20px;font-weight:700;color:#ffffff;letter-spacing:-1.200px;font-style:italic;-webkit-text-stroke:0.5px #fff;">shopify</div>
<div class="t" style="left:672.50px;top:24.90px;font-size:13px;font-weight:400;color:#c4c4c4;letter-spacing:0.199px;">Search</div>
<div class="t" style="left:1216.00px;top:26.11px;font-size:10.5px;font-weight:700;color:#cccccc;letter-spacing:-0.667px;">CTRL</div>
<div class="t" style="left:960.00px;width:600px;text-align:center;top:26.11px;font-size:10.5px;font-weight:700;color:#cccccc;letter-spacing:0.000px;">K</div>
<div class="t" style="left:1438.20px;width:600px;text-align:center;top:20.63px;font-size:8px;font-weight:700;color:#ffffff;letter-spacing:0.000px;">1</div>
<div class="t" style="left:1766.60px;top:25.67px;font-size:11.5px;font-weight:400;color:#0b5a52;letter-spacing:-0.350px;-webkit-text-stroke:0.35px #0b5a52;">MB</div>
<div class="t" style="left:1793.00px;top:24.80px;font-size:13px;font-weight:700;color:#e8e8e8;letter-spacing:-0.464px;">Misteriozna Beauty</div>
<div class="t" style="left:48.40px;top:79.00px;font-size:13px;font-weight:400;color:#303030;letter-spacing:0.504px;-webkit-text-stroke:0.5px #303030;">Home</div>
<div class="t" style="left:48.40px;top:107.00px;font-size:13px;font-weight:400;color:#b5b5b5;letter-spacing:0.473px;-webkit-text-stroke:0.5px #b5b5b5;">Orders</div>
<div class="t" style="left:48.40px;top:135.00px;font-size:13px;font-weight:400;color:#303030;letter-spacing:0.570px;-webkit-text-stroke:0.5px #303030;">Products</div>
<div class="t" style="left:48.40px;top:163.00px;font-size:13px;font-weight:400;color:#b5b5b5;letter-spacing:0.530px;-webkit-text-stroke:0.5px #b5b5b5;">Customers</div>
<div class="t" style="left:48.40px;top:191.00px;font-size:13px;font-weight:400;color:#303030;letter-spacing:0.592px;-webkit-text-stroke:0.5px #303030;">Content</div>
<div class="t" style="left:48.40px;top:219.00px;font-size:13px;font-weight:400;color:#303030;letter-spacing:0.358px;-webkit-text-stroke:0.5px #303030;">Finance</div>
<div class="t" style="left:48.40px;top:247.00px;font-size:13px;font-weight:400;color:#303030;letter-spacing:0.796px;-webkit-text-stroke:0.5px #303030;">Analytics</div>
<div class="t" style="left:48.40px;top:275.00px;font-size:13px;font-weight:400;color:#616161;letter-spacing:0.328px;">Reports</div>
<div class="t" style="left:48.40px;top:303.00px;font-size:13px;font-weight:400;color:#616161;letter-spacing:0.374px;">Live View</div>
<div class="t" style="left:48.40px;top:339.30px;font-size:13px;font-weight:400;color:#303030;letter-spacing:0.628px;-webkit-text-stroke:0.5px #303030;">Marketing</div>
<div class="t" style="left:48.40px;top:367.30px;font-size:13px;font-weight:400;color:#b5b5b5;letter-spacing:0.603px;-webkit-text-stroke:0.5px #b5b5b5;">Discounts</div>
<div class="t" style="left:10.20px;top:407.24px;font-size:12px;font-weight:400;color:#616161;letter-spacing:0.393px;-webkit-text-stroke:0.4px #616161;">Sales channels</div>
<div class="t" style="left:48.40px;top:435.00px;font-size:13px;font-weight:400;color:#303030;letter-spacing:0.339px;-webkit-text-stroke:0.3px #303030;">Online Store</div>
<div class="t" style="left:48.40px;top:463.00px;font-size:13px;font-weight:400;color:#303030;letter-spacing:0.547px;-webkit-text-stroke:0.3px #303030;">Inbox</div>
<div class="t" style="left:48.40px;top:491.00px;font-size:13px;font-weight:400;color:#303030;letter-spacing:0.323px;-webkit-text-stroke:0.3px #303030;">Point of Sale</div>
<div class="t" style="left:10.20px;top:535.14px;font-size:12px;font-weight:400;color:#616161;letter-spacing:0.714px;-webkit-text-stroke:0.4px #616161;">Apps</div>
<div class="t" style="left:48.10px;top:882.10px;font-size:13px;font-weight:400;color:#303030;letter-spacing:0.502px;-webkit-text-stroke:0.5px #303030;">Settings</div>
<div class="t" style="left:282.70px;top:78.99px;font-size:19.5px;font-weight:400;color:#303030;letter-spacing:-0.016px;-webkit-text-stroke:0.8px #303030;">Analytics</div>
<div class="t" style="left:284.30px;top:122.52px;font-size:12.5px;font-weight:400;color:#303030;letter-spacing:0.164px;-webkit-text-stroke:0.25px #303030;">Last 30 days</div>
<div class="t" style="left:389.80px;top:122.52px;font-size:12.5px;font-weight:400;color:#303030;letter-spacing:0.030px;-webkit-text-stroke:0.25px #303030;">Compare to: Mar 15–Apr 13, 2025</div>
<div class="t" style="left:1820.70px;top:82.82px;font-size:12.5px;font-weight:400;color:#ffffff;letter-spacing:0.244px;-webkit-text-stroke:0.5px #ffffff;">Customize</div>
<div class="t" style="left:272.40px;top:178.40px;font-size:13px;font-weight:400;color:#303030;letter-spacing:0.366px;-webkit-text-stroke:0.38px #303030;">Gross sales</div>
<div class="t" style="left:272.40px;top:203.87px;font-size:13.5px;font-weight:400;color:#303030;letter-spacing:0.002px;-webkit-text-stroke:0.38px #303030;">€10,773.07</div>
<div class="t" style="left:359.00px;top:205.29px;font-size:11px;font-weight:400;color:#29845a;letter-spacing:-0.416px;-webkit-text-stroke:0.55px #29845a;">21%</div>
<div class="t" style="left:685.40px;top:178.40px;font-size:13px;font-weight:400;color:#303030;letter-spacing:0.552px;-webkit-text-stroke:0.38px #303030;">Returning customer rate</div>
<div class="t" style="left:685.40px;top:203.87px;font-size:13.5px;font-weight:400;color:#303030;letter-spacing:-0.039px;-webkit-text-stroke:0.38px #303030;">81.58%</div>
<div class="t" style="left:749.90px;top:205.29px;font-size:11px;font-weight:400;color:#616161;letter-spacing:-0.116px;-webkit-text-stroke:0.55px #616161;">16%</div>
<div class="t" style="left:1099.40px;top:178.40px;font-size:13px;font-weight:400;color:#303030;letter-spacing:0.639px;-webkit-text-stroke:0.38px #303030;">Orders fulfilled</div>
<div class="t" style="left:1099.40px;top:203.87px;font-size:13.5px;font-weight:400;color:#303030;letter-spacing:1.069px;-webkit-text-stroke:0.38px #303030;">84</div>
<div class="t" style="left:1133.80px;top:205.29px;font-size:11px;font-weight:400;color:#303030;letter-spacing:0.084px;-webkit-text-stroke:0.55px #303030;">14%</div>
<div class="t" style="left:1512.40px;top:178.40px;font-size:13px;font-weight:400;color:#303030;letter-spacing:0.533px;-webkit-text-stroke:0.38px #303030;">Orders</div>
<div class="t" style="left:1512.40px;top:203.87px;font-size:13.5px;font-weight:400;color:#303030;letter-spacing:0.569px;-webkit-text-stroke:0.38px #303030;">86</div>
<div class="t" style="left:1546.80px;top:205.29px;font-size:11px;font-weight:400;color:#303030;letter-spacing:1.200px;-webkit-text-stroke:0.55px #303030;">9%</div>
<div class="t" style="left:294.60px;top:269.30px;font-size:13px;font-weight:400;color:#303030;letter-spacing:0.485px;-webkit-text-stroke:0.38px #303030;">Total sales over time</div>
<div class="t" style="left:272.50px;top:297.39px;font-size:19.5px;font-weight:400;color:#303030;letter-spacing:0.038px;-webkit-text-stroke:0.38px #303030;">€11,961.36</div>
<div class="t" style="left:387.90px;top:302.89px;font-size:11px;font-weight:700;color:#29845a;letter-spacing:-0.216px;">13%</div>
<div class="t" style="left:274.00px;top:333.59px;font-size:11px;font-weight:400;color:#616161;letter-spacing:1.061px;">€3K</div>
<div class="t" style="left:274.00px;top:386.59px;font-size:11px;font-weight:400;color:#616161;letter-spacing:1.061px;">€2K</div>
<div class="t" style="left:274.00px;top:439.59px;font-size:11px;font-weight:400;color:#616161;letter-spacing:0.211px;">€1K</div>
<div class="t" style="left:274.00px;top:492.59px;font-size:11px;font-weight:400;color:#616161;letter-spacing:1.200px;">€0</div>
<div class="t" style="left:274.00px;top:545.59px;font-size:11px;font-weight:400;color:#616161;letter-spacing:0.183px;">-€1K</div>
<div class="t" style="left:23.00px;width:600px;text-align:center;top:567.67px;font-size:11.5px;font-weight:400;color:#616161;letter-spacing:0.000px;">Apr 14</div>
<div class="t" style="left:91.90px;width:600px;text-align:center;top:567.67px;font-size:11.5px;font-weight:400;color:#616161;letter-spacing:0.000px;">Apr 16</div>
<div class="t" style="left:160.80px;width:600px;text-align:center;top:567.67px;font-size:11.5px;font-weight:400;color:#616161;letter-spacing:0.000px;">Apr 18</div>
<div class="t" style="left:229.70px;width:600px;text-align:center;top:567.67px;font-size:11.5px;font-weight:400;color:#616161;letter-spacing:0.000px;">Apr 20</div>
<div class="t" style="left:298.60px;width:600px;text-align:center;top:567.67px;font-size:11.5px;font-weight:400;color:#616161;letter-spacing:0.000px;">Apr 22</div>
<div class="t" style="left:367.50px;width:600px;text-align:center;top:567.67px;font-size:11.5px;font-weight:400;color:#616161;letter-spacing:0.000px;">Apr 24</div>
<div class="t" style="left:436.40px;width:600px;text-align:center;top:567.67px;font-size:11.5px;font-weight:400;color:#616161;letter-spacing:0.000px;">Apr 26</div>
<div class="t" style="left:505.30px;width:600px;text-align:center;top:567.67px;font-size:11.5px;font-weight:400;color:#616161;letter-spacing:0.000px;">Apr 28</div>
<div class="t" style="left:574.20px;width:600px;text-align:center;top:567.67px;font-size:11.5px;font-weight:400;color:#616161;letter-spacing:0.000px;">Apr 30</div>
<div class="t" style="left:643.10px;width:600px;text-align:center;top:567.67px;font-size:11.5px;font-weight:400;color:#616161;letter-spacing:0.000px;">May 2</div>
<div class="t" style="left:712.00px;width:600px;text-align:center;top:567.67px;font-size:11.5px;font-weight:400;color:#616161;letter-spacing:0.000px;">May 4</div>
<div class="t" style="left:780.90px;width:600px;text-align:center;top:567.67px;font-size:11.5px;font-weight:400;color:#616161;letter-spacing:0.000px;">May 6</div>
<div class="t" style="left:849.80px;width:600px;text-align:center;top:567.67px;font-size:11.5px;font-weight:400;color:#616161;letter-spacing:0.000px;">May 8</div>
<div class="t" style="left:918.70px;width:600px;text-align:center;top:567.67px;font-size:11.5px;font-weight:400;color:#616161;letter-spacing:0.000px;">May 10</div>
<div class="t" style="left:987.60px;width:600px;text-align:center;top:567.67px;font-size:11.5px;font-weight:400;color:#616161;letter-spacing:0.000px;">May 12</div>
<div class="t" style="left:680.00px;top:605.27px;font-size:11.5px;font-weight:400;color:#616161;letter-spacing:-0.165px;">Apr 14–May 13, 2025</div>
<div class="t" style="left:824.00px;top:605.27px;font-size:11.5px;font-weight:400;color:#616161;letter-spacing:-0.169px;">Mar 15–Apr 13, 2025</div>
<div class="t" style="left:1375.80px;top:268.40px;font-size:13px;font-weight:400;color:#303030;letter-spacing:0.533px;-webkit-text-stroke:0.38px #303030;">Total sales breakdown</div>
<div class="t" style="left:1387.20px;top:306.07px;font-size:13.5px;font-weight:400;color:#3b4a93;letter-spacing:-0.008px;">Gross sales</div>
<div class="t" style="right:100.80px;top:306.07px;font-size:13.5px;font-weight:400;color:#303030;letter-spacing:-0.020px;">€10,773.07</div>
<div class="t" style="right:57.00px;top:307.49px;font-size:11px;font-weight:400;color:#29845a;letter-spacing:0.384px;-webkit-text-stroke:0.4px #29845a;">21%</div>
<div class="t" style="left:1387.20px;top:347.62px;font-size:13.5px;font-weight:400;color:#3b4a93;letter-spacing:0.252px;">Discounts</div>
<div class="t" style="right:100.80px;top:347.62px;font-size:13.5px;font-weight:400;color:#303030;letter-spacing:0.829px;">-€750.99</div>
<div class="t" style="right:57.00px;top:349.04px;font-size:11px;font-weight:400;color:#4a4a4a;letter-spacing:-0.280px;-webkit-text-stroke:0.4px #4a4a4a;">142%</div>
<div class="t" style="left:1387.20px;top:389.17px;font-size:13.5px;font-weight:400;color:#3b4a93;letter-spacing:0.003px;">Returns</div>
<div class="t" style="right:100.80px;top:389.17px;font-size:13.5px;font-weight:400;color:#303030;letter-spacing:-0.014px;">-€195.21</div>
<div class="t" style="left:1387.20px;top:430.72px;font-size:13.5px;font-weight:400;color:#3b4a93;letter-spacing:0.102px;">Net sales</div>
<div class="t" style="right:100.80px;top:430.72px;font-size:13.5px;font-weight:400;color:#303030;letter-spacing:0.317px;">€9,826.87</div>
<div class="t" style="right:57.00px;top:432.14px;font-size:11px;font-weight:400;color:#29845a;letter-spacing:0.384px;-webkit-text-stroke:0.4px #29845a;">14%</div>
<div class="t" style="left:1387.20px;top:472.27px;font-size:13.5px;font-weight:400;color:#3b4a93;letter-spacing:0.185px;">Shipping charges</div>
<div class="t" style="right:100.80px;top:472.27px;font-size:13.5px;font-weight:400;color:#303030;letter-spacing:0.731px;">€264.20</div>
<div class="t" style="right:57.00px;top:473.69px;font-size:11px;font-weight:400;color:#4a4a4a;letter-spacing:0.384px;-webkit-text-stroke:0.4px #4a4a4a;">18%</div>
<div class="t" style="left:1387.20px;top:513.82px;font-size:13.5px;font-weight:400;color:#3b4a93;letter-spacing:0.060px;">Return fees</div>
<div class="t" style="right:100.80px;top:513.82px;font-size:13.5px;font-weight:400;color:#303030;letter-spacing:0.751px;">€0.00</div>
<div class="t" style="left:1387.20px;top:555.37px;font-size:13.5px;font-weight:400;color:#3b4a93;letter-spacing:0.130px;">Taxes</div>
<div class="t" style="right:100.80px;top:555.37px;font-size:13.5px;font-weight:400;color:#303030;letter-spacing:0.067px;">€1,870.29</div>
<div class="t" style="right:57.00px;top:556.79px;font-size:11px;font-weight:400;color:#616161;letter-spacing:0.384px;-webkit-text-stroke:0.4px #616161;">12%</div>
<div class="t" style="left:1387.20px;top:596.92px;font-size:13.5px;font-weight:400;color:#3b4a93;letter-spacing:0.150px;">Total sales</div>
<div class="t" style="right:100.80px;top:596.92px;font-size:13.5px;font-weight:400;color:#303030;letter-spacing:-0.242px;">€11,961.36</div>
<div class="t" style="right:57.00px;top:598.34px;font-size:11px;font-weight:400;color:#29845a;letter-spacing:0.384px;-webkit-text-stroke:0.4px #29845a;">13%</div>
<div class="t" style="left:294.30px;top:674.40px;font-size:13px;font-weight:400;color:#303030;letter-spacing:0.482px;-webkit-text-stroke:0.38px #303030;">Total sales by sales channel</div>
<div class="t" style="left:86.50px;width:600px;text-align:center;top:777.97px;font-size:20px;font-weight:400;color:#303030;letter-spacing:0.000px;-webkit-text-stroke:0.38px #303030;">€12K</div>
<div class="t" style="left:380.00px;top:803.89px;font-size:11px;font-weight:700;color:#29845a;letter-spacing:-0.266px;">13%</div>
<div class="t" style="left:518.50px;top:762.32px;font-size:12.5px;font-weight:400;color:#5a5a5a;letter-spacing:0.047px;">Online Store</div>
<div class="t" style="right:1205.70px;top:762.32px;font-size:12.5px;font-weight:400;color:#616161;letter-spacing:-0.245px;">€10.6K</div>
<div class="t" style="left:725.60px;top:763.19px;font-size:11px;font-weight:400;color:#29845a;letter-spacing:1.200px;-webkit-text-stroke:0.4px #29845a;">7%</div>
<div class="t" style="left:518.50px;top:790.32px;font-size:12.5px;font-weight:400;color:#5a5a5a;letter-spacing:0.290px;">Misteriozna App</div>
<div class="t" style="right:1205.70px;top:790.32px;font-size:12.5px;font-weight:400;color:#616161;letter-spacing:-0.043px;">€1.3K</div>
<div class="t" style="left:724.50px;top:792.46px;font-size:9.5px;font-weight:400;color:#29845a;letter-spacing:-0.037px;-webkit-text-stroke:0.4px #29845a;">121%</div>
<div class="t" style="left:518.50px;top:818.32px;font-size:12.5px;font-weight:400;color:#5a5a5a;letter-spacing:0.243px;">Marketplace Connect</div>
<div class="t" style="right:1206.50px;top:818.32px;font-size:12.5px;font-weight:400;color:#616161;letter-spacing:1.200px;">€0</div>
<div class="t" style="left:725.00px;top:820.46px;font-size:9.5px;font-weight:400;color:#4a4a4a;letter-spacing:0.096px;-webkit-text-stroke:0.4px #4a4a4a;">100%</div>
<div class="t" style="left:823.60px;top:673.20px;font-size:13px;font-weight:400;color:#303030;letter-spacing:0.481px;-webkit-text-stroke:0.38px #303030;">Average order value over time</div>
<div class="t" style="left:823.60px;top:700.19px;font-size:19.5px;font-weight:400;color:#303030;letter-spacing:0.192px;-webkit-text-stroke:0.38px #303030;">€116.54</div>
<div class="t" style="left:913.50px;top:705.69px;font-size:11px;font-weight:700;color:#29845a;letter-spacing:0.484px;">28%</div>
<div class="t" style="left:825.00px;top:736.99px;font-size:11px;font-weight:400;color:#616161;letter-spacing:1.005px;">€500</div>
<div class="t" style="left:825.00px;top:816.09px;font-size:11px;font-weight:400;color:#616161;letter-spacing:1.200px;">€0</div>
<div class="t" style="left:576.70px;width:600px;text-align:center;top:837.77px;font-size:11.5px;font-weight:400;color:#616161;letter-spacing:0.000px;">Apr 14</div>
<div class="t" style="left:653.55px;width:600px;text-align:center;top:837.77px;font-size:11.5px;font-weight:400;color:#616161;letter-spacing:0.000px;">Apr 19</div>
<div class="t" style="left:730.40px;width:600px;text-align:center;top:837.77px;font-size:11.5px;font-weight:400;color:#616161;letter-spacing:0.000px;">Apr 24</div>
<div class="t" style="left:807.25px;width:600px;text-align:center;top:837.77px;font-size:11.5px;font-weight:400;color:#616161;letter-spacing:0.000px;">Apr 29</div>
<div class="t" style="left:884.10px;width:600px;text-align:center;top:837.77px;font-size:11.5px;font-weight:400;color:#616161;letter-spacing:0.000px;">May 4</div>
<div class="t" style="left:960.95px;width:600px;text-align:center;top:837.77px;font-size:11.5px;font-weight:400;color:#616161;letter-spacing:0.000px;">May 9</div>
<div class="t" style="left:955.00px;top:875.27px;font-size:11.5px;font-weight:400;color:#616161;letter-spacing:-0.137px;">Apr 14–May 13, 2025</div>
<div class="t" style="left:1099.00px;top:875.27px;font-size:11.5px;font-weight:400;color:#616161;letter-spacing:-0.169px;">Mar 15–Apr 13, 2025</div>
<div class="t" style="left:1397.40px;top:673.90px;font-size:13px;font-weight:400;color:#303030;letter-spacing:0.579px;-webkit-text-stroke:0.38px #303030;">Total sales by product</div>
<div class="t" style="left:1375.20px;top:704.87px;font-size:11.5px;font-weight:400;color:#616161;letter-spacing:0.113px;">Vitamin A Hyaluron Booster · Misteriozna Beauty · Gesichtspflege</div>
<div class="t" style="left:1741.30px;top:731.04px;font-size:12px;font-weight:400;color:#616161;letter-spacing:-0.274px;">€1,272.30</div>
<div class="t" style="left:1812.50px;top:731.24px;font-size:12px;font-weight:400;color:#4a4a4a;letter-spacing:0.156px;-webkit-text-stroke:0.45px #4a4a4a;">5%</div>
<div class="t" style="left:1759.00px;top:766.04px;font-size:12px;font-weight:400;color:#616161;letter-spacing:-0.299px;">€1,335.07</div>
<div class="t" style="left:1375.20px;top:808.87px;font-size:11.5px;font-weight:400;color:#616161;letter-spacing:0.104px;">Perfect Skin Mineral Puder Make-Up · Misteriozna Beauty · Gesichtspflege</div>
<div class="t" style="left:1613.90px;top:835.04px;font-size:12px;font-weight:400;color:#616161;letter-spacing:-0.298px;">€816.25</div>
<div class="t" style="left:1675.50px;top:835.24px;font-size:12px;font-weight:400;color:#29845a;letter-spacing:0.384px;-webkit-text-stroke:0.45px #29845a;">23%</div>
<div class="t" style="left:1570.00px;top:870.04px;font-size:12px;font-weight:400;color:#616161;letter-spacing:-0.148px;">€661.00</div>
</body></html>
